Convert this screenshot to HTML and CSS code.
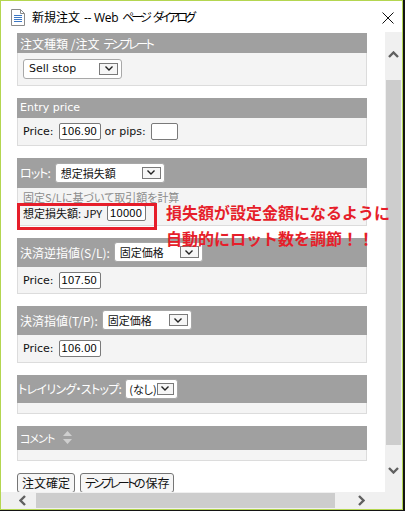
FILE: index.html
```html
<!DOCTYPE html>
<html lang="ja">
<head>
    <meta charset="UTF-8">
    <meta name="viewport" content="width=device-width, initial-scale=1.0">
    <title>新規注文</title>
    <link rel="stylesheet" href="styles.css">
</head>
<body>
    <div class="window">
        <div class="titlebar">
            <svg class="doc-icon" width="14" height="17" viewBox="0 0 14 17">
                <path d="M0.5 0.5 H9.5 L13.5 4.5 V16.5 H0.5 Z" fill="#fff" stroke="#8a8a8a"/>
                <path d="M9.5 0.5 V4.5 H13.5" fill="none" stroke="#8a8a8a"/>
                <path d="M3 6.5 H11 M3 8.5 H11 M3 10.5 H11 M3 12.5 H11" stroke="#3d78c4"/>
            </svg>
            <span class="title">新規注文<span class="web">-- Web</span><span class="kana-t">ページ</span><span class="kana-t">ダイアログ</span></span>
            <svg class="close" width="12" height="12" viewBox="0 0 12 12">
                <path d="M0.5 0.5 L11.5 11.5 M11.5 0.5 L0.5 11.5" stroke="#111" stroke-width="1"/>
            </svg>
        </div>

        <div class="client">
            <div class="content">
                <div class="panel">
                    <div class="panel-head">注文種類 /注文<span class="kana">テンプレート</span></div>
                    <div class="panel-body first">
                        <div class="select sel-type"><span class="latin">Sell stop</span><span class="drop"><svg width="8" height="5" viewBox="0 0 8 5"><path d="M0.5 0.5 L4 4 L7.5 0.5" fill="none" stroke="#222" stroke-width="1.4"/></svg></span></div>
                    </div>
                </div>

                <div class="panel">
                    <div class="panel-head latin">Entry price</div>
                    <div class="panel-body row">
                        <span class="latin">Price:</span>
                        <span class="field w-price">106.90</span>
                        <span class="latin gap-l">or pips:</span>
                        <span class="field w-pips"></span>
                    </div>
                </div>

                <div class="panel lot">
                    <div class="panel-head with-select tall">
                        <span><span class="kana-s">ロット</span>:</span>
                        <div class="select sel-lot"><span>想定損失額</span><span class="drop"><svg width="8" height="5" viewBox="0 0 8 5"><path d="M0.5 0.5 L4 4 L7.5 0.5" fill="none" stroke="#222" stroke-width="1.4"/></svg></span></div>
                    </div>
                    <div class="panel-body lot-body">
                        <div class="hint">固定S/Lに基づいて取引額を計算</div>
                        <div class="row">
                            <span>想定損失額: JPY</span>
                            <span class="field small w-jpy">10000<span class="caret"></span></span>
                        </div>
                    </div>
                    <div class="mark"></div>
                </div>

                <div class="panel">
                    <div class="panel-head with-select">
                        <span>決済逆指値(S/L):</span>
                        <div class="select sel-sl"><span>固定価格</span><span class="drop"><svg width="8" height="5" viewBox="0 0 8 5"><path d="M0.5 0.5 L4 4 L7.5 0.5" fill="none" stroke="#222" stroke-width="1.4"/></svg></span></div>
                    </div>
                    <div class="panel-body row short">
                        <span class="latin">Price:</span>
                        <span class="field w-price">107.50</span>
                    </div>
                </div>

                <div class="panel">
                    <div class="panel-head with-select">
                        <span>決済指値(T/P):</span>
                        <div class="select sel-tp"><span>固定価格</span><span class="drop"><svg width="8" height="5" viewBox="0 0 8 5"><path d="M0.5 0.5 L4 4 L7.5 0.5" fill="none" stroke="#222" stroke-width="1.4"/></svg></span></div>
                    </div>
                    <div class="panel-body row">
                        <span class="latin">Price:</span>
                        <span class="field w-price">106.00</span>
                    </div>
                </div>

                <div class="panel">
                    <div class="panel-head with-select mid trail">
                        <span>トレイリング・ストップ:</span>
                        <div class="select sel-trail"><span>(なし)</span><span class="drop"><svg width="8" height="5" viewBox="0 0 8 5"><path d="M0.5 0.5 L4 4 L7.5 0.5" fill="none" stroke="#222" stroke-width="1.4"/></svg></span></div>
                    </div>
                    <div class="panel-body empty"></div>
                </div>

                <div class="panel">
                    <div class="panel-head comment">
                        <span class="kana-s">コメント</span>
                        <svg class="sort" width="9" height="13" viewBox="0 0 9 13">
                            <path d="M4.5 0 L9 5 H0 Z M0 8 H9 L4.5 13 Z" fill="#cfcfcf"/>
                        </svg>
                    </div>
                    <div class="panel-body empty"></div>
                </div>

                <div class="actions">
                    <button>注文確定</button>
                    <button><span class="kana">テンプレート</span>の保存</button>
                </div>
            </div>

            <div class="vscroll">
                <div class="arrow"><svg width="11" height="7" viewBox="0 0 11 7"><path d="M1 6 L5.5 1.5 L10 6" fill="none" stroke="#606060" stroke-width="2.4"/></svg></div>
                <div class="thumb"></div>
                <div class="arrow"><svg width="11" height="7" viewBox="0 0 11 7"><path d="M1 1 L5.5 5.5 L10 1" fill="none" stroke="#606060" stroke-width="2.4"/></svg></div>
            </div>
            <div class="hscroll">
                <div class="arrow left"><svg width="7" height="11" viewBox="0 0 7 11"><path d="M6 1 L1.5 5.5 L6 10" fill="none" stroke="#606060" stroke-width="2.4"/></svg></div>
                <div class="thumb"></div>
                <div class="arrow right"><svg width="7" height="11" viewBox="0 0 7 11"><path d="M1 1 L5.5 5.5 L1 10" fill="none" stroke="#606060" stroke-width="2.4"/></svg></div>
            </div>
            <div class="corner"></div>
        </div>

        <div class="callout">損失額が設定金額になるように<br>自動的にロット数を調節！！</div>
    </div>
</body>
</html>
```

FILE: styles.css
```css
:root {
    --head: #a0a0a0;
    --panel: #f4f4f4;
    --line: #dcdcdc;
    --bar: #f0f0f0;
    --thumb: #cdcdcd;
    --red: #e61e2a;
}

* {
    margin: 0;
    padding: 0;
    box-sizing: border-box;
}

body {
    background: #141414;
    font-family: "Noto Sans CJK JP", sans-serif;
    font-feature-settings: "palt";
    font-size: 12px;
    color: #111;
}

/* katakana is proportional in the original UI font, so squeeze it */
.kana {
    letter-spacing: -2.5px;
}

.kana-s {
    letter-spacing: -1px;
}

.window {
    position: relative;
    width: 403px;
    height: 510px;
    border: 1px solid #b4d650;
    background: #fff;
    display: flex;
    flex-direction: column;
}

.titlebar {
    height: 31px;
    display: flex;
    align-items: center;
    padding-left: 10px;
    padding-right: 8px;
}

.doc-icon {
    margin-top: 1px;
}

.title {
    margin-left: 7px;
    font-size: 12px;
    color: #000;
    white-space: nowrap;
    display: flex;
    align-items: baseline;
}

.web {
    margin-left: 4px;
    font-family: "Open Sans", sans-serif;
    font-size: 12px;
    letter-spacing: -0.3px;
}

.kana-t {
    margin-left: 4px;
    letter-spacing: -3px;
}

.close {
    margin-left: auto;
    margin-top: 2px;
}

.client {
    flex: 1;
    display: grid;
    grid-template-columns: 1fr 17px;
    grid-template-rows: 1fr 17px;
    min-height: 0;
}

.content {
    overflow: hidden;
    padding: 1px 18px 0 16px;
}

.latin {
    font-family: "DejaVu Sans", sans-serif;
    font-size: 11px;
}

.panel {
    margin-bottom: 12px;
}

.panel-head {
    height: 20px;
    background: var(--head);
    color: #fff;
    padding: 0 3px;
    display: flex;
    align-items: center;
    gap: 4px;
    white-space: nowrap;
}

.panel-head.with-select {
    height: 29px;
}

.panel-head.tall {
    height: 30px;
}

.panel-head.mid {
    height: 28px;
}

.panel-head.trail {
    padding-left: 1px;
    letter-spacing: -0.7px;
}

.panel-head.comment {
    height: 24px;
    gap: 9px;
    font-size: 11px;
}

.panel-body {
    background: var(--panel);
    border: 1px solid var(--line);
    border-top: none;
    padding: 5px 5px;
}

.panel-body.first {
    padding-bottom: 6px;
}

.panel-body.short {
    padding-bottom: 4px;
}

.panel-body.empty {
    height: 11px;
    padding: 0;
}

.row {
    display: flex;
    align-items: center;
    gap: 5px;
    font-size: 11px;
    white-space: nowrap;
}

.gap-l {
    margin-left: -1px;
}

.select {
    height: 20px;
    display: inline-flex;
    align-items: center;
    justify-content: space-between;
    background: #fff;
    border: 1px solid #a8a8a8;
    border-radius: 3px;
    padding: 0 3px 0 5px;
    color: #111;
    font-size: 11px;
    letter-spacing: 0;
}

.drop {
    width: 19px;
    height: 12px;
    border: 1px solid #7a7a7a;
    background: #f6f6f6;
    display: flex;
    align-items: center;
    justify-content: center;
}

.sel-type { width: 99px; }
.sel-lot { width: 110px; }
.sel-sl { width: 89px; }
.sel-tp { width: 90px; }
.sel-trail { width: 53px; padding-left: 3px; }

.field {
    height: 17px;
    display: inline-flex;
    align-items: center;
    background: #fff;
    border: 1px solid #7a7a7a;
    border-radius: 2px;
    padding: 0 2px;
    font-family: "Liberation Sans", sans-serif;
    font-size: 11px;
    letter-spacing: 0.3px;
    color: #000;
}

.field.small {
    height: 16px;
}

.w-price { width: 42px; }
.w-pips { width: 27px; }
.w-jpy { width: 39px; }

.caret {
    width: 1px;
    height: 12px;
    margin-left: 1px;
    background: #000;
}

.lot {
    position: relative;
}

.lot-body {
    padding: 1px 5px 4px;
}

.hint {
    color: #8c8c8c;
    font-size: 11px;
    line-height: 16px;
    white-space: nowrap;
}

.mark {
    position: absolute;
    left: 0;
    top: 45px;
    width: 140px;
    height: 27px;
    border: 3px solid var(--red);
}

.actions {
    display: flex;
    gap: 5px;
}

.actions button {
    height: 20px;
    padding: 0 4px;
    border: 1px solid #767676;
    border-radius: 3px;
    background: #f6f6f6;
    font-family: "Noto Sans CJK JP", sans-serif;
    font-feature-settings: "palt";
    font-size: 12px;
    color: #111;
}

.vscroll {
    background: var(--bar);
    display: flex;
    flex-direction: column;
}

.vscroll .arrow {
    height: 44px;
    display: flex;
    align-items: center;
    justify-content: center;
}

.vscroll .thumb {
    flex: 1;
    margin: 4px 1px 3px 1px;
    background: var(--thumb);
}

.hscroll {
    background: var(--bar);
    display: flex;
    align-items: stretch;
}

.hscroll .arrow {
    display: flex;
    align-items: center;
}

.hscroll .arrow.left {
    width: 35px;
    padding-left: 18px;
}

.hscroll .arrow.right {
    width: 47px;
    padding-left: 20px;
}

.hscroll .thumb {
    flex: 1;
    margin: 1px 3px 1px 0;
    background: var(--thumb);
}

.corner {
    background: var(--bar);
}

.callout {
    position: absolute;
    left: 165px;
    top: 198px;
    color: var(--red);
    font-size: 16px;
    font-weight: 700;
    line-height: 26px;
    font-feature-settings: normal;
    white-space: nowrap;
}
```
